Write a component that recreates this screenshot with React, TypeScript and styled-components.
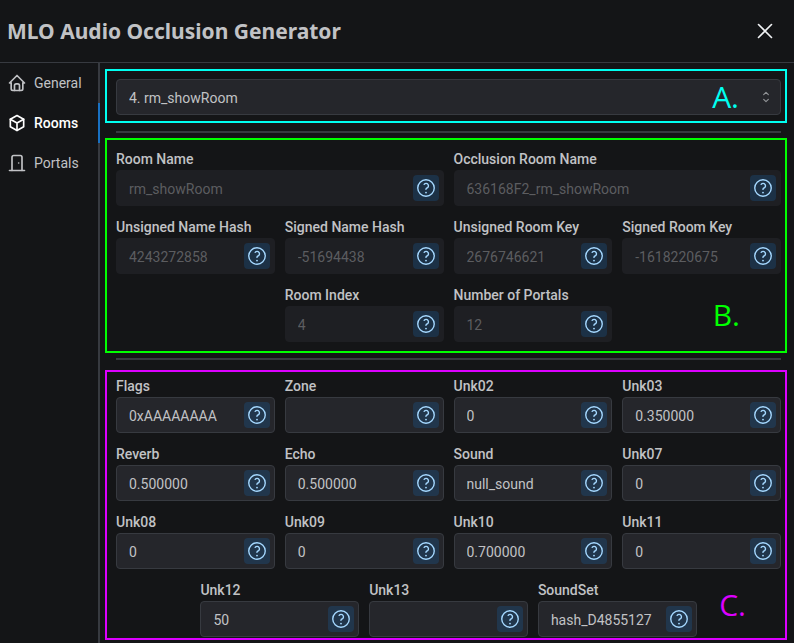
import React, { useId, useState } from "react";
import styled, { createGlobalStyle, css } from "styled-components";

const GlobalStyle = createGlobalStyle`
  *, *::before, *::after { box-sizing: border-box; }
  html { background: #141517; }
  body {
    margin: 0;
    background: #141517;
    color: #c1c2c5;
    font-family: Roboto, "Liberation Sans", sans-serif;
    font-size: 14px;
    line-height: 22px;
  }
  button, input, select { font: inherit; color: inherit; }
`;

const Page = styled.div`
  display: flex;
  flex-direction: column;
  min-height: 100vh;
`;

const Header = styled.header`
  display: flex;
  align-items: center;
  justify-content: space-between;
  padding: 16px 16px 16px 7px;
  border-bottom: 1px solid #373a40;
`;

const Title = styled.h1`
  margin: 0;
  font-family: "Noto Sans", "Open Sans", sans-serif;
  font-size: 21px;
  font-weight: 700;
  line-height: 30px;
`;

const CloseButton = styled.button`
  display: flex;
  padding: 0;
  border: 0;
  background: none;
  color: #f1f3f5;
  cursor: pointer;
`;

const Body = styled.div`
  display: flex;
  flex: 1;
`;

const Nav = styled.nav`
  display: flex;
  flex-direction: column;
  flex: 0 0 100px;
  border-right: 2px solid #373a40;
`;

const NavItem = styled.button<{ $active: boolean }>`
  display: flex;
  align-items: center;
  gap: 7px;
  height: 40px;
  margin-right: -2px;
  padding: 0 0 0 7px;
  border: 0;
  border-right: 2px solid ${(p) => (p.$active ? "#1971c2" : "transparent")};
  background: none;
  color: ${(p) => (p.$active ? "#ffffff" : "#c1c2c5")};
  font-weight: ${(p) => (p.$active ? 500 : 400)};
  cursor: pointer;
`;

const Main = styled.main`
  flex: 1;
  min-width: 0;
  padding: 6px 7px 3px 5px;
`;

const sectionKinds = {
  picker: css`
    padding: 8px 4px 6px 9px;
    border-color: #00fff0;
    color: #00fff0;
  `,
  identity: css`
    padding: 8px 4px 9px 9px;
    border-color: #00ff00;
    color: #00ff00;
  `,
  values: css`
    padding: 3px 4px 1px 9px;
    border-color: #dc00ff;
    color: #dc00ff;
  `,
};

const Section = styled.section<{ $kind: keyof typeof sectionKinds }>`
  position: relative;
  border: 2px solid;
  ${(p) => sectionKinds[p.$kind]}
`;

const Mark = styled.span<{ $right: number; $bottom: number }>`
  position: absolute;
  right: ${(p) => p.$right}px;
  bottom: ${(p) => p.$bottom}px;
  font-family: "Open Sans", sans-serif;
  font-size: 30px;
  line-height: 32px;
  pointer-events: none;
`;

const Divider = styled.hr<{ $above: number; $below: number }>`
  height: 2px;
  margin: ${(p) => p.$above}px 6px ${(p) => p.$below}px 11px;
  border: 0;
  background: #373a40;
`;

const SelectWrap = styled.div`
  display: grid;
  align-items: center;
  color: #c1c2c5;

  > * { grid-area: 1 / 1; }
  > svg {
    justify-self: end;
    margin-right: 8px;
    color: #909296;
    pointer-events: none;
  }
`;

const Select = styled.select`
  width: 100%;
  height: 36px;
  padding: 1px 32px 0 12px;
  border: 1px solid #373a40;
  border-radius: 4px;
  background: #25262b;
  appearance: none;
`;

const Fields = styled.div`
  display: flex;
  flex-wrap: wrap;
  justify-content: center;
  gap: 10px;
  color: #c1c2c5;
`;

const FieldRoot = styled.div<{ $wide: boolean }>`
  flex: 0 0 ${(p) => (p.$wide ? "calc((100% - 10px) / 2)" : "calc((100% - 30px) / 4)")};
  min-width: 0;
`;

const Label = styled.label`
  display: block;
  font-weight: 500;
  white-space: nowrap;
`;

const FieldBox = styled.div<{ $disabled: boolean }>`
  display: flex;
  align-items: center;
  height: 36px;
  padding-right: 4px;
  border: 1px solid ${(p) => (p.$disabled ? "#1e1f23" : "#373a40")};
  border-radius: 4px;
  background: ${(p) => (p.$disabled ? "#1e1f23" : "#25262b")};
`;

const Input = styled.input`
  flex: 1;
  min-width: 0;
  height: 34px;
  padding: 1px 0 0 12px;
  border: 0;
  outline: 0;
  background: none;

  &:disabled { color: #5c5d60; }
`;

const HelpButton = styled.button`
  display: flex;
  align-items: center;
  justify-content: center;
  flex: 0 0 26px;
  height: 26px;
  padding: 0;
  border: 0;
  border-radius: 4px;
  background: rgba(25, 113, 194, 0.22);
  color: #a5d8ff;
  cursor: pointer;
`;

function Icon({ size, stroke = 2, children }: { size: number; stroke?: number; children: React.ReactNode }) {
  return (
    <svg
      width={size}
      height={size}
      viewBox="0 0 24 24"
      fill="none"
      stroke="currentColor"
      strokeWidth={stroke}
      strokeLinecap="round"
      strokeLinejoin="round"
      aria-hidden="true"
    >
      {children}
    </svg>
  );
}

const navItems = [
  {
    name: "General",
    icon: (
      <>
        <path d="M5 12H3l9-9 9 9h-2" />
        <path d="M5 12v7a2 2 0 0 0 2 2h10a2 2 0 0 0 2-2v-7" />
        <path d="M9 21v-6a2 2 0 0 1 2-2h2a2 2 0 0 1 2 2v6" />
      </>
    ),
  },
  {
    name: "Rooms",
    icon: (
      <>
        <path d="M12 3l8 4.5v9L12 21l-8-4.5v-9L12 3" />
        <path d="M12 12l8-4.5M12 12v9M12 12L4 7.5" />
      </>
    ),
  },
  {
    name: "Portals",
    icon: (
      <>
        <path d="M14 12v.01" />
        <path d="M3 21h18" />
        <path d="M6 21V5a2 2 0 0 1 2-2h8a2 2 0 0 1 2 2v16" />
      </>
    ),
  },
];

type FieldData = { label: string; value: string; wide?: boolean };

const identityFields: FieldData[] = [
  { label: "Room Name", value: "rm_showRoom", wide: true },
  { label: "Occlusion Room Name", value: "636168F2_rm_showRoom", wide: true },
  { label: "Unsigned Name Hash", value: "4243272858" },
  { label: "Signed Name Hash", value: "-51694438" },
  { label: "Unsigned Room Key", value: "2676746621" },
  { label: "Signed Room Key", value: "-1618220675" },
  { label: "Room Index", value: "4" },
  { label: "Number of Portals", value: "12" },
];

const valueFields: FieldData[] = [
  { label: "Flags", value: "0xAAAAAAAA" },
  { label: "Zone", value: "" },
  { label: "Unk02", value: "0" },
  { label: "Unk03", value: "0.350000" },
  { label: "Reverb", value: "0.500000" },
  { label: "Echo", value: "0.500000" },
  { label: "Sound", value: "null_sound" },
  { label: "Unk07", value: "0" },
  { label: "Unk08", value: "0" },
  { label: "Unk09", value: "0" },
  { label: "Unk10", value: "0.700000" },
  { label: "Unk11", value: "0" },
  { label: "Unk12", value: "50" },
  { label: "Unk13", value: "" },
  { label: "SoundSet", value: "hash_D4855127" },
];

function Field({ label, value, wide = false, disabled = false }: FieldData & { disabled?: boolean }) {
  const id = useId();
  return (
    <FieldRoot $wide={wide}>
      <Label htmlFor={id}>{label}</Label>
      <FieldBox $disabled={disabled}>
        <Input id={id} type="text" defaultValue={value} disabled={disabled} />
        <HelpButton type="button" aria-label={`Help for ${label}`}>
          <Icon size={22} stroke={1.5}>
            <circle cx="12" cy="12" r="9" />
            <path d="M12 17v.01" strokeWidth="2" />
            <path d="M12 13.5a1.5 1.5 0 0 1 1-1.5 2.6 2.6 0 1 0-3-4" />
          </Icon>
        </HelpButton>
      </FieldBox>
    </FieldRoot>
  );
}

export default function App() {
  const [tab, setTab] = useState("Rooms");
  return (
    <Page>
      <GlobalStyle />
      <Header>
        <Title>MLO Audio Occlusion Generator</Title>
        <CloseButton type="button" aria-label="Close">
          <Icon size={26} stroke={1.5}>
            <path d="M18 6L6 18M6 6l12 12" />
          </Icon>
        </CloseButton>
      </Header>
      <Body>
        <Nav>
          {navItems.map((item) => (
            <NavItem key={item.name} type="button" $active={item.name === tab} onClick={() => setTab(item.name)}>
              <Icon size={20}>{item.icon}</Icon>
              {item.name}
            </NavItem>
          ))}
        </Nav>
        <Main>
          <Section $kind="picker">
            <SelectWrap>
              <Select aria-label="Room" defaultValue="4">
                <option value="4">4. rm_showRoom</option>
              </Select>
              <Icon size={14}>
                <path d="M8 8l4-4 4 4M8 16l4 4 4-4" />
              </Icon>
            </SelectWrap>
            <Mark $right={46} $bottom={8}>A.</Mark>
          </Section>
          <Divider $above={8} $below={5} />
          <Section $kind="identity">
            <Fields>
              {identityFields.map((f) => (
                <Field key={f.label} {...f} disabled />
              ))}
            </Fields>
            <Mark $right={45} $bottom={20}>B.</Mark>
          </Section>
          <Divider $above={5} $below={10} />
          <Section $kind="values">
            <Fields>
              {valueFields.map((f) => (
                <Field key={f.label} {...f} />
              ))}
            </Fields>
            <Mark $right={39} $bottom={17}>C.</Mark>
          </Section>
        </Main>
      </Body>
    </Page>
  );
}
